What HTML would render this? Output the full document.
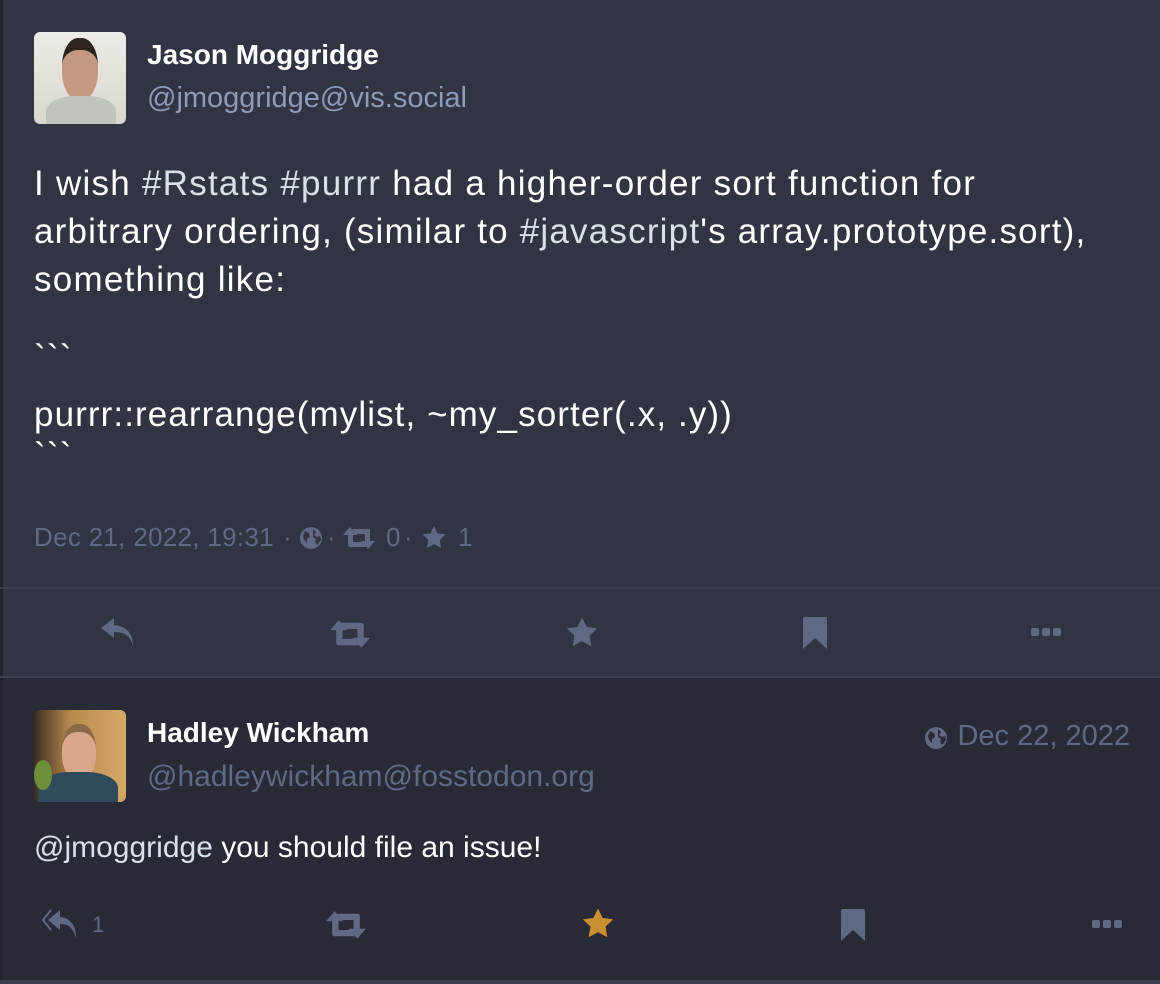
<!DOCTYPE html><html><head><style>
body{margin:0;width:1160px;height:984px;background:#282a36;font-family:"Liberation Sans",sans-serif;position:relative;overflow:hidden}
.top{position:absolute;left:0;top:0;width:1160px;height:677px;background:#313543;border-left:3px solid #22242e;box-sizing:border-box}
.bot{position:absolute;left:0;top:677px;width:1160px;height:304px;background:#282a36;border-left:3px solid #22242e;box-sizing:border-box}
.ab{position:absolute;white-space:nowrap}
.hr{position:absolute;left:0;width:1160px;height:2px;background:#3c4050}
.t{color:#fff;font-size:35px;letter-spacing:1.25px}
.tag{color:#d9e1e8}
.m{position:absolute;color:#606984;font-size:26px;top:522px;white-space:nowrap}
svg{position:absolute}
</style></head><body>
<div class="top"></div><div class="bot"></div>
<div class="hr" style="top:587px"></div><div class="hr" style="top:676px"></div>
<div class="hr" style="top:980px;height:4px;background:#3a3e4c"></div>
<div class="ab" style="left:34px;top:32px;width:92px;height:92px;border-radius:6px;background:linear-gradient(#ecebe5,#d8d8d0);overflow:hidden">
<div style="position:absolute;left:28px;top:6px;width:36px;height:50px;border-radius:45%;background:#c49a82;border-top:12px solid #2d241e"></div>
<div style="position:absolute;left:12px;top:64px;width:70px;height:40px;border-radius:40% 40% 0 0;background:#bfc4bc"></div></div>
<div class="ab" style="left:147px;top:39px;color:#fff;font-size:28px;font-weight:bold">Jason Moggridge</div>
<div class="ab" style="left:147px;top:82px;color:#8c9bb8;font-size:29px">@jmoggridge@vis.social</div>
<div class="ab t" style="left:34px;top:164px">I wish <span class="tag">#Rstats</span> <span class="tag">#purrr</span> had a higher-order sort function for</div>
<div class="ab t" style="left:34px;top:212px;letter-spacing:1.2px">arbitrary ordering, (similar to <span class="tag">#javascript</span>'s array.prototype.sort),</div>
<div class="ab t" style="left:34px;top:260px">something like:</div>
<div class="ab t" style="left:34px;top:338px">&#96;&#96;&#96;</div>
<div class="ab t" style="left:34px;top:395px;letter-spacing:1.1px">purrr::rearrange(mylist, ~my_sorter(.x, .y))</div>
<div class="ab t" style="left:34px;top:436px">&#96;&#96;&#96;</div>
<div class="m" style="left:34px;letter-spacing:0.3px">Dec 21, 2022, 19:31</div>
<div class="m" style="left:283px">·</div><div class="m" style="left:327px">·</div>
<div class="m" style="left:386px">0</div><div class="m" style="left:404px">·</div><div class="m" style="left:458px">1</div>
<svg style="left:299px;top:526px" width="24" height="24" viewBox="0 0 24 24"><circle cx="12" cy="12" r="11" fill="#606984"/><path d="M6 5l4 2 1 4-3 2v4l-3-3-1-4zM14 3l3 3-2 3 3 2 3-1 1 4-4 5-2-3 1-3-3-2z" fill="#313543"/></svg>
<svg style="left:343px;top:527px" width="32" height="22" viewBox="0 0 32 22"><path d="M0 8L7 0L14 8H10V15H19L23 20H7Q5 20 5 18V8Z M32 14L25 22L18 14H22V7H13L9 2H25Q27 2 27 4V14Z" fill="#606984"/></svg>
<svg style="left:421px;top:525px" width="26" height="25" viewBox="0 0 24 24"><path d="M12 1l3.4 7 7.6 1-5.5 5.3 1.3 7.7L12 18.4 5.2 22l1.3-7.7L1 9l7.6-1z" fill="#606984"/></svg>
<svg style="left:100px;top:616px" width="36" height="32" viewBox="0 0 36 32"><path d="M14 2L1 12l13 10v-6c10 0 16 3 19 14 0-12-6-20-19-21z" fill="#606984"/></svg>
<svg style="left:330px;top:620px" width="40" height="28" viewBox="0 0 32 22"><path d="M0 8L7 0L14 8H10V15H19L23 20H7Q5 20 5 18V8Z M32 14L25 22L18 14H22V7H13L9 2H25Q27 2 27 4V14Z" fill="#606984"/></svg>
<svg style="left:565px;top:616px" width="34" height="33" viewBox="0 0 24 24"><path d="M12 1l3.4 7 7.6 1-5.5 5.3 1.3 7.7L12 18.4 5.2 22l1.3-7.7L1 9l7.6-1z" fill="#606984"/></svg>
<svg style="left:802px;top:617px" width="26" height="32" viewBox="0 0 26 32"><path d="M1 2a2 2 0 0 1 2-2h20a2 2 0 0 1 2 2v30L13 21 1 32z" fill="#606984"/></svg>
<svg style="left:1031px;top:627px" width="30" height="10" viewBox="0 0 30 10"><rect x="0" y="1" width="8" height="8" rx="2" fill="#606984"/><rect x="11" y="1" width="8" height="8" rx="2" fill="#606984"/><rect x="22" y="1" width="8" height="8" rx="2" fill="#606984"/></svg>
<div class="ab" style="left:34px;top:710px;width:92px;height:92px;border-radius:6px;background:linear-gradient(90deg,#3b2c20,#b98a4e 40%,#d6a868);overflow:hidden">
<div style="position:absolute;left:28px;top:14px;width:34px;height:48px;border-radius:45%;background:#d9a88a;border-top:8px solid #8a6a45"></div>
<div style="position:absolute;left:4px;top:62px;width:80px;height:40px;border-radius:40% 40% 0 0;background:#2f4a5a"></div>
<div style="position:absolute;left:0;top:50px;width:18px;height:30px;background:#6e8f3a;border-radius:50%"></div></div>
<div class="ab" style="left:147px;top:717px;color:#fff;font-size:28px;font-weight:bold">Hadley Wickham</div>
<div class="ab" style="left:147px;top:760px;color:#606984;font-size:30px">@hadleywickham@fosstodon.org</div>
<svg style="left:924px;top:726px" width="24" height="24" viewBox="0 0 24 24"><circle cx="12" cy="12" r="11" fill="#606984"/><path d="M6 5l4 2 1 4-3 2v4l-3-3-1-4zM14 3l3 3-2 3 3 2 3-1 1 4-4 5-2-3 1-3-3-2z" fill="#282a36"/></svg>
<div class="ab" style="right:30px;top:720px;color:#606984;font-size:29px">Dec 22, 2022</div>
<div class="ab" style="left:34px;top:831px;color:#fff;font-size:30px"><span style="color:#d9e1e8">@jmoggridge</span> you should file an issue!</div>
<svg style="left:42px;top:908px" width="40" height="32" viewBox="0 0 40 32"><path d="M9 2L1 12l8 10" fill="none" stroke="#606984" stroke-width="2"/><path d="M18 2L6 12l12 10v-6c8 0 13 3 16 14 0-12-5-20-16-21z" fill="#606984"/></svg>
<div class="ab" style="left:92px;top:912px;color:#606984;font-size:22px">1</div>
<svg style="left:326px;top:911px" width="40" height="28" viewBox="0 0 32 22"><path d="M0 8L7 0L14 8H10V15H19L23 20H7Q5 20 5 18V8Z M32 14L25 22L18 14H22V7H13L9 2H25Q27 2 27 4V14Z" fill="#606984"/></svg>
<svg style="left:581px;top:907px" width="34" height="33" viewBox="0 0 24 24"><path d="M12 1l3.4 7 7.6 1-5.5 5.3 1.3 7.7L12 18.4 5.2 22l1.3-7.7L1 9l7.6-1z" fill="#ca8f2e"/></svg>
<svg style="left:840px;top:909px" width="26" height="32" viewBox="0 0 26 32"><path d="M1 2a2 2 0 0 1 2-2h20a2 2 0 0 1 2 2v30L13 21 1 32z" fill="#606984"/></svg>
<svg style="left:1092px;top:919px" width="30" height="10" viewBox="0 0 30 10"><rect x="0" y="1" width="8" height="8" rx="2" fill="#606984"/><rect x="11" y="1" width="8" height="8" rx="2" fill="#606984"/><rect x="22" y="1" width="8" height="8" rx="2" fill="#606984"/></svg>
</body></html>
